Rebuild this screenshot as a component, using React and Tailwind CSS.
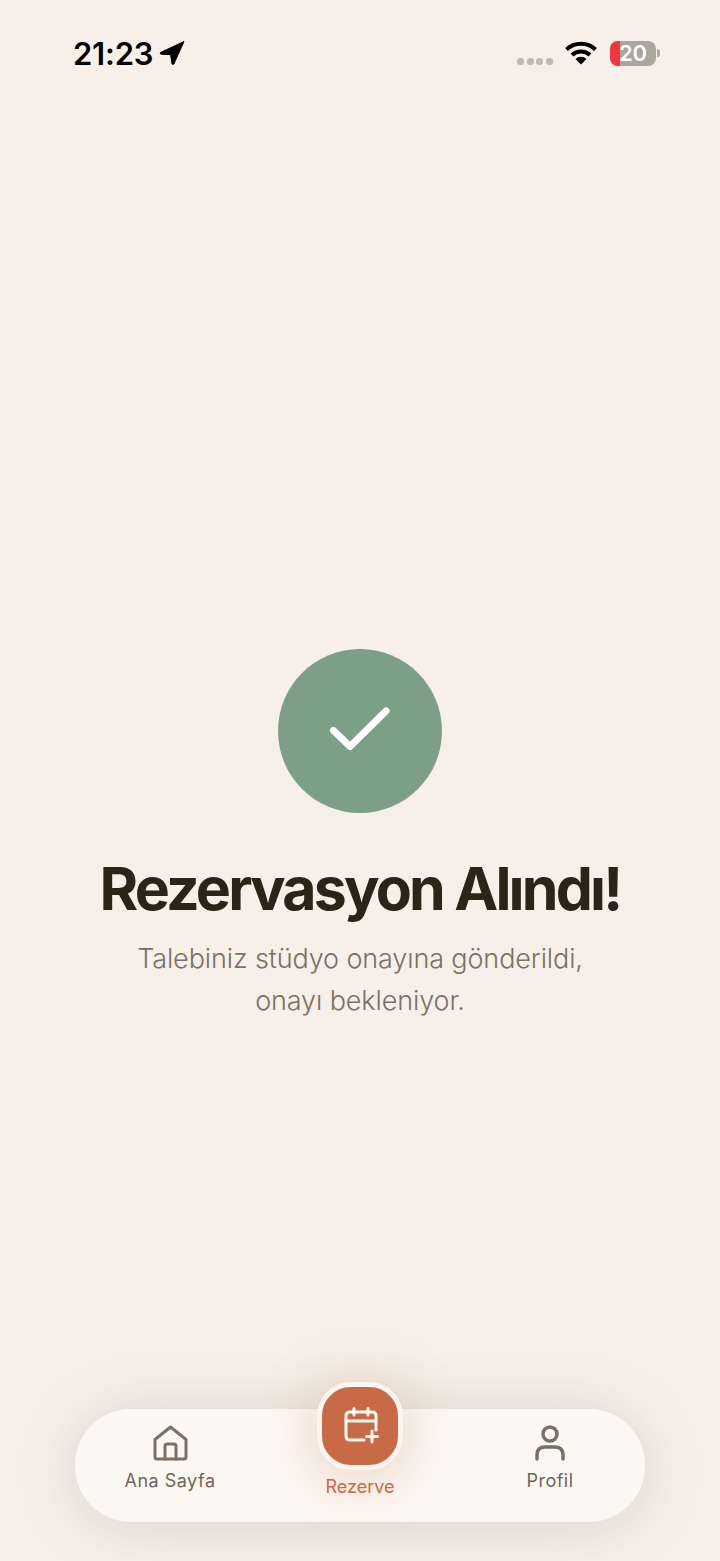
import React from "react";

const sans = "font-['Inter','Liberation_Sans',sans-serif]";

const StatusBar = () => (
  <div className="flex items-center justify-between pl-[73px] pr-[60px] pt-[31px] h-[76px]">
    <div className="flex items-center gap-[6px]">
      <span className={`${sans} text-[31px] leading-[34px] font-semibold text-black tracking-[-0.2px]`}>21:23</span>
      <svg width="26" height="26" viewBox="0 0 26 26" className="mt-[-2px]">
        <path d="M25 1.5 L1.5 12.5 Q0.6 13.4 2 14.2 L11.6 14.6 L13 24 Q14 25 14.8 24 Z" fill="#000" stroke="#000" strokeWidth="1" strokeLinejoin="round" />
      </svg>
    </div>
    <div className="flex items-center mt-[-1px]">
      <div className="flex gap-[2.6px] mt-[16px] mr-[12px]">
        <div className="w-[7px] h-[7px] rounded-[3px] bg-[#bdbab4]" />
        <div className="w-[7px] h-[7px] rounded-[3px] bg-[#bdbab4]" />
        <div className="w-[7px] h-[7px] rounded-[3px] bg-[#bdbab4]" />
        <div className="w-[7px] h-[7px] rounded-[3px] bg-[#bdbab4]" />
      </div>
      <svg width="32" height="24" viewBox="0 0 32 24" className="mr-[13px]">
        <path d="M1.5 8.5 A21 21 0 0 1 30.5 8.5" fill="none" stroke="#000" strokeWidth="4" />
        <path d="M7 14 A13 13 0 0 1 25 14" fill="none" stroke="#000" strokeWidth="4" />
        <path d="M16 23.5 L10.5 18 A8 8 0 0 1 21.5 18 Z" fill="#000" />
      </svg>
      <div className="relative flex h-[25px] w-[46px] items-center justify-center rounded-[8px] bg-[#aaa6a0]">
        <div className="absolute left-0 top-0 h-full w-[10px] rounded-l-[8px] bg-[#f0383c]" />
        <span className={`${sans} relative text-[22px] leading-[25px] font-semibold text-white`}>20</span>
      </div>
      <div className="ml-[1px] h-[8px] w-[3px] rounded-r-full bg-[#aaa6a0]" />
    </div>
  </div>
);

const Success = () => (
  <div className="flex flex-col items-center pt-[573px]">
    <div className="flex h-[164px] w-[164px] items-center justify-center rounded-full bg-[#7c9f85]">
      <svg width="64" height="64" viewBox="0 0 64 64" fill="none" stroke="#fff" strokeWidth="7" strokeLinecap="round" strokeLinejoin="round">
        <path d="M5.5 31.5 L22 47.5 L58 12" />
      </svg>
    </div>
    <h1 className={`${sans} mt-[43px] text-[59px] leading-[66px] font-bold tracking-[-2.8px] text-[#2d2418]`}>Rezervasyon Alındı!</h1>
    <p className={`${sans} mt-[16px] text-center text-[27px] leading-[42px] font-light tracking-[-0.12px] text-[#7a7064]`}>
      Talebiniz stüdyo onayına gönderildi,
      <br />
      onayı bekleniyor.
    </p>
  </div>
);

const BottomNav = () => (
  <div className="absolute bottom-[39px] left-[75px] right-[75px] h-[113px] rounded-[56px] bg-[#fbf8f2] shadow-[0_4px_60px_rgba(90,70,50,0.17)]">
    <div className="flex h-full">
      <div className="flex w-[190px] flex-col items-center pt-[15px]">
        <svg width="38" height="38" viewBox="0 0 38 38" fill="none" stroke="#7a7064" strokeWidth="3" strokeLinejoin="round" strokeLinecap="round" className="ml-[1px]">
          <path d="M3 15.5 L18.5 3 L34 15.5 V33 Q34 35 32 35 H5 Q3 35 3 33 Z" />
          <path d="M13 35 V22 Q13 20 15 20 H22 Q24 20 24 22 V35" />
        </svg>
        <span className={`${sans} mt-[8px] text-[18px] leading-[22px] font-normal tracking-[0.5px] text-[#6f665b]`}>Ana Sayfa</span>
      </div>
      <div className="flex-1" />
      <div className="flex w-[190px] flex-col items-center pt-[15px]">
        <svg width="38" height="38" viewBox="0 0 38 38" fill="none" stroke="#7a7064" strokeWidth="3.5" strokeLinecap="round">
          <circle cx="19" cy="10" r="7" />
          <path d="M6 35 V31 Q6 23 14 23 H24 Q32 23 32 31 V35" />
        </svg>
        <span className={`${sans} mt-[8px] text-[18px] leading-[22px] font-normal tracking-[0.5px] text-[#6f665b]`}>Profil</span>
      </div>
    </div>

    <div className="absolute left-[242px] top-[-27px] flex w-[86px] flex-col items-center">
      <div className="flex h-[88px] w-[86px] items-center justify-center rounded-[34px] border-[5px] border-[#fbf6ef] bg-[#c96a47] shadow-[0_6px_60px_rgba(201,106,71,0.3)]">
        <svg width="36" height="38" viewBox="0 0 36 38" fill="none" stroke="#fdf8f2" strokeWidth="3" strokeLinecap="round" strokeLinejoin="round" className="ml-[3px]">
          <path d="M20 33 H6 Q2 33 2 29 V9 Q2 5 6 5 H28 Q32 5 32 9 V23" />
          <path d="M2 14 H32" />
          <path d="M10 1.5 V8" />
          <path d="M24 1.5 V8" />
          <path d="M28 24 V35" />
          <path d="M22.5 29.5 H33.5" />
        </svg>
      </div>
      <span className={`${sans} mt-[6px] text-[18px] leading-[22px] font-normal text-[#c96a47]`}>Rezerve</span>
    </div>
  </div>
);

export default function App() {
  return (
    <div className="relative h-[1561px] w-[720px] overflow-hidden bg-[#f6f0e8]">
      <StatusBar />
      <Success />
      <BottomNav />
    </div>
  );
}
